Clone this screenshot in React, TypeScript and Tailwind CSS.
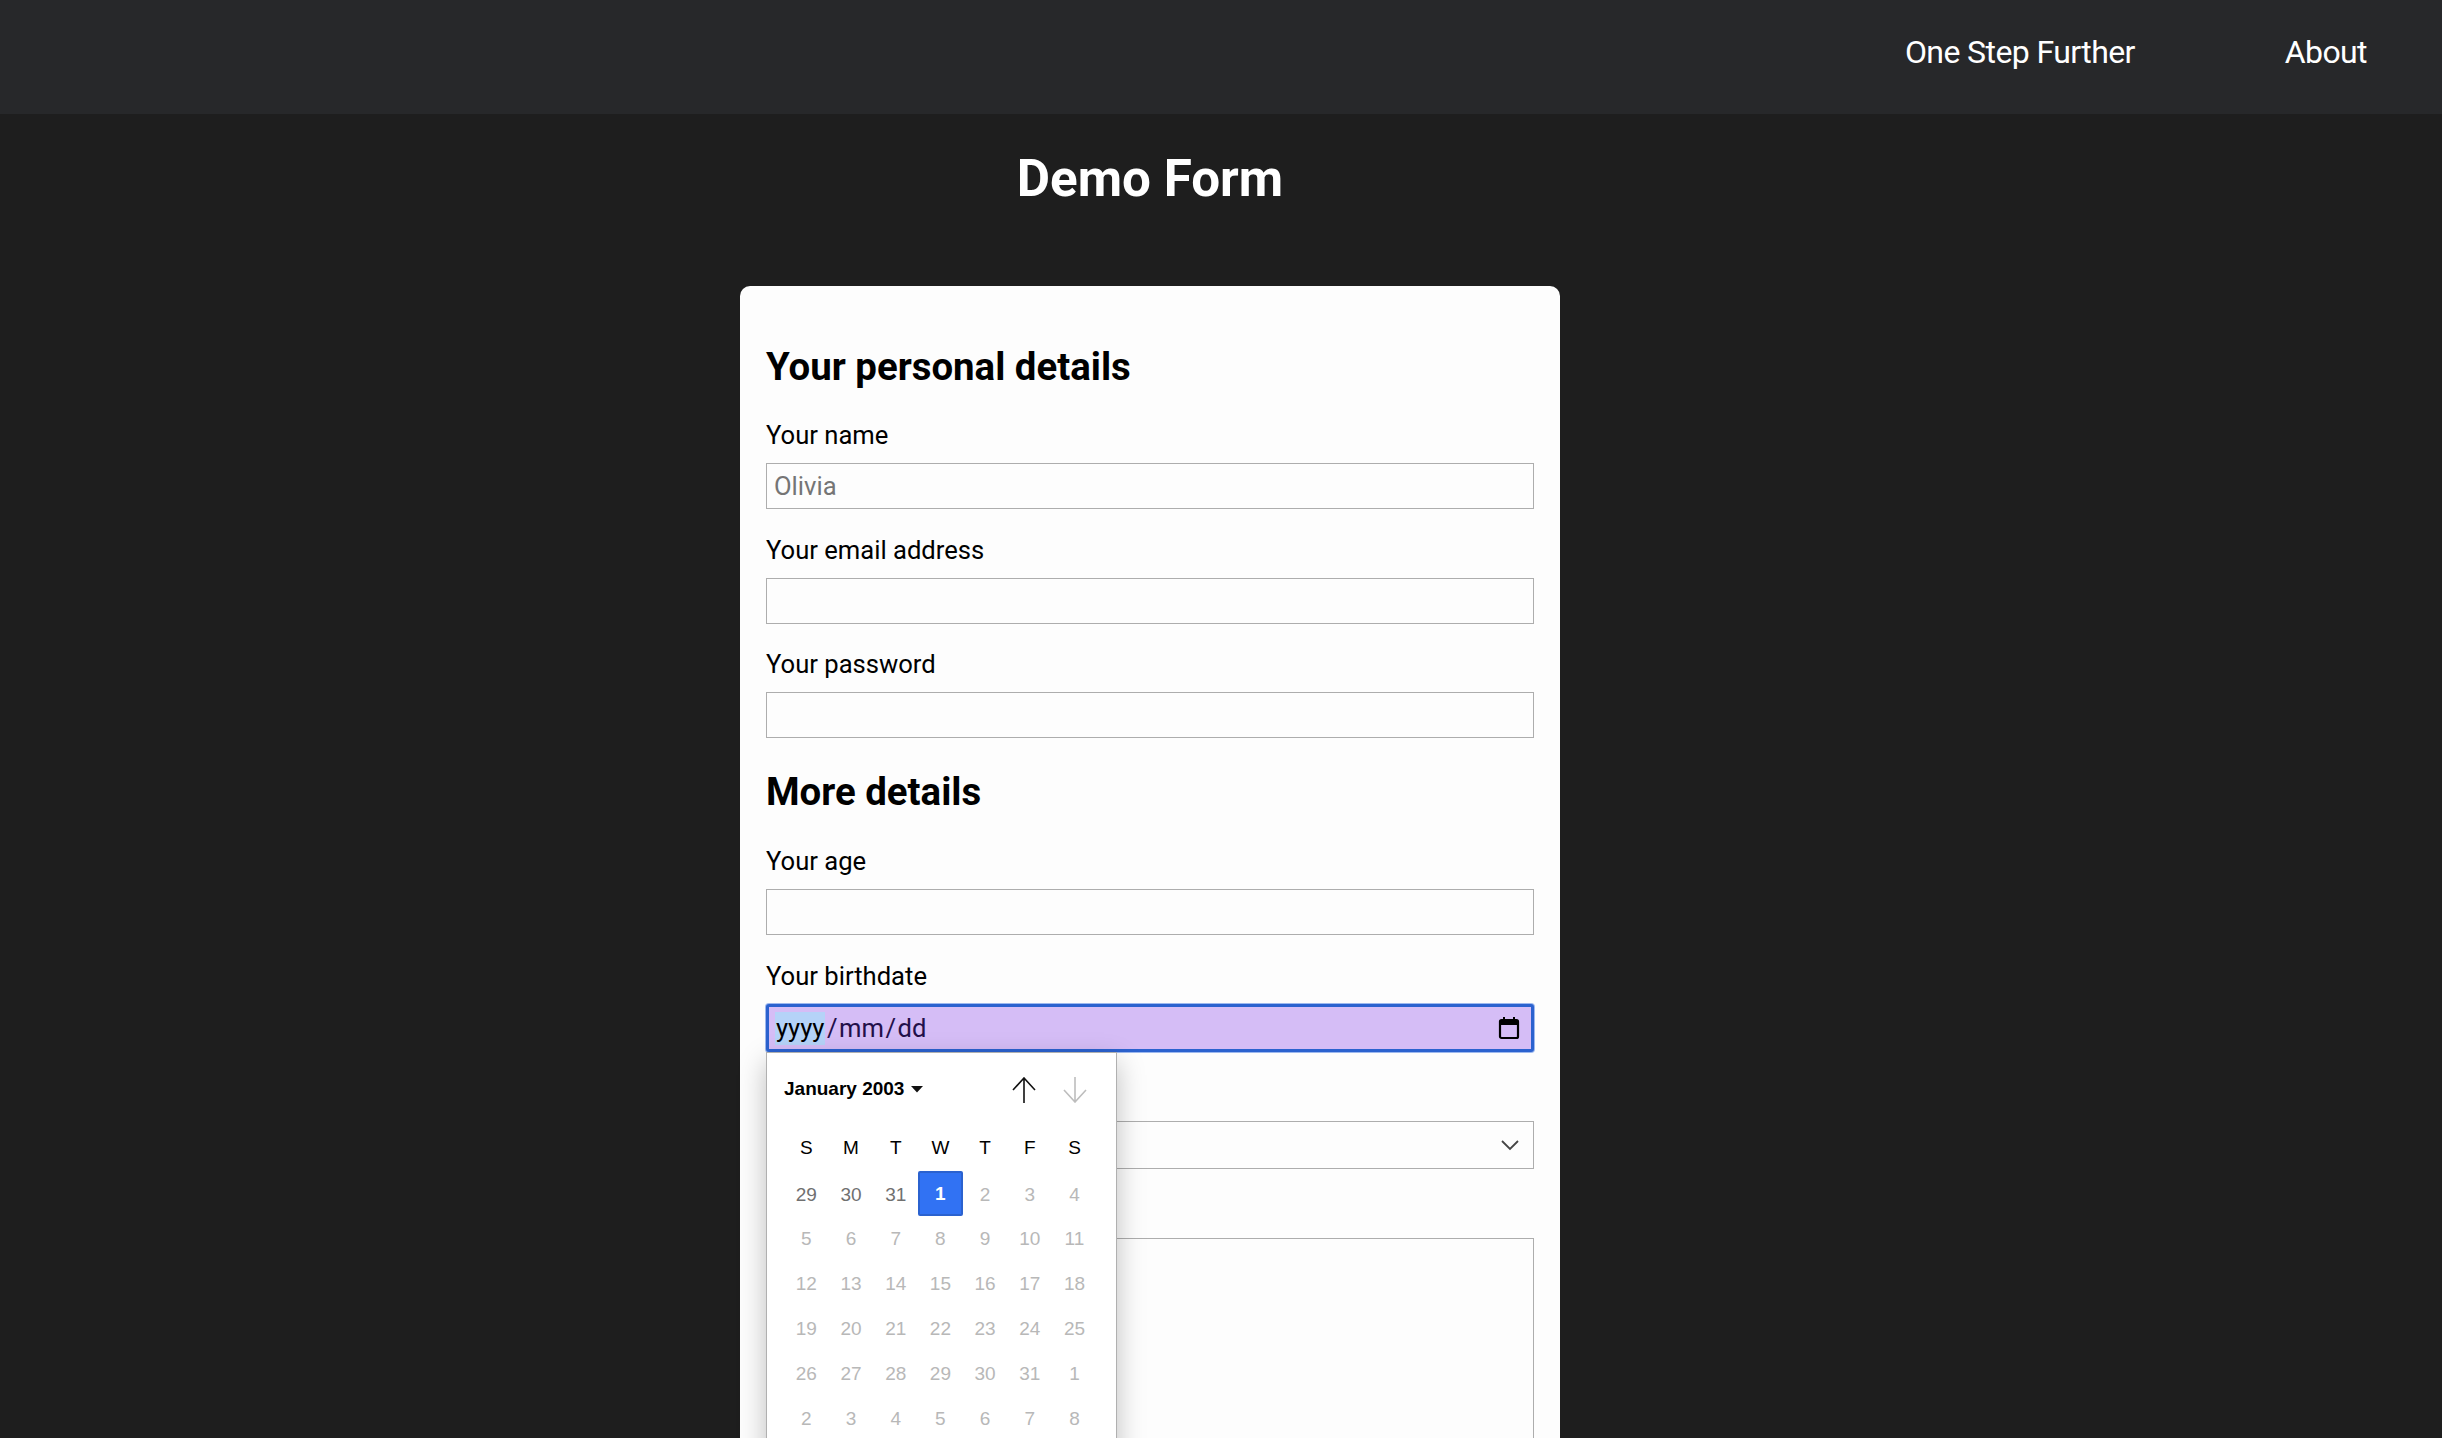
const rows = [
  ["29", "30", "31", "1", "2", "3", "4"],
  ["5", "6", "7", "8", "9", "10", "11"],
  ["12", "13", "14", "15", "16", "17", "18"],
  ["19", "20", "21", "22", "23", "24", "25"],
  ["26", "27", "28", "29", "30", "31", "1"],
  ["2", "3", "4", "5", "6", "7", "8"],
];

function Field({ label, placeholder }: { label: string; placeholder?: string }) {
  return (
    <div className="mb-[24.5px]">
      <label className="block text-[25.6px] leading-[32px] mb-[12px] text-black">{label}</label>
      <input
        placeholder={placeholder}
        className="block w-full h-[46px] border border-[#adadad] bg-[#fdfdfd] px-[7px] text-[25.6px] outline-none placeholder:text-[#757575]"
      />
    </div>
  );
}

function Calendar() {
  return (
    <div className="absolute z-10 left-0 top-[92px] w-[351px] h-[430px] bg-white border border-[#b0b0b0] shadow-[0_10px_26px_rgba(0,0,0,0.25)] font-['Liberation_Sans',sans-serif]">
      <div className="flex items-center h-[62px] mt-[6px] pl-[17px] pr-[29px]">
        <span className="text-[19px] font-bold text-black">January 2003</span>
        <svg width="12" height="7" viewBox="0 0 12 7" className="ml-[7px]">
          <path d="M0 0H12L6 6.5Z" fill="#111" />
        </svg>
        <svg width="24" height="26" viewBox="0 0 24 26" className="ml-auto" fill="none" stroke="#111" strokeWidth="1.6">
          <path d="M12 26V1M1 13L12 1L23 13" />
        </svg>
        <svg width="24" height="26" viewBox="0 0 24 26" className="ml-[27px]" fill="none" stroke="#bdbdbd" strokeWidth="1.6">
          <path d="M12 0V25M1 13L12 25L23 13" />
        </svg>
      </div>
      <div className="px-[17px]">
        <div className="grid grid-cols-[repeat(7,44.7px)] h-[46px] mt-[6px] pb-[2px] items-center text-center text-[19px] text-black">
          {["S", "M", "T", "W", "T", "F", "S"].map((d, i) => (
            <span key={i}>{d}</span>
          ))}
        </div>
        {rows.map((r, ri) => (
          <div key={ri} className="grid grid-cols-[repeat(7,44.7px)] h-[44.8px] items-center text-center text-[19px]">
            {r.map((d, i) => {
              if (ri === 0 && i === 3)
                return (
                  <span key={i} className="flex h-[45px] -mt-[3px] pt-[1px] items-center justify-center rounded-[2px] bg-[#3172f3] border-2 border-[#2b62cf] font-bold text-white">
                    {d}
                  </span>
                );
              return (
                <span key={i} className={ri === 0 && i < 3 ? "text-[#707070]" : "text-[#b8b8b8]"}>
                  {d}
                </span>
              );
            })}
          </div>
        ))}
      </div>
    </div>
  );
}

export default function App() {
  return (
    <div className="h-[1438px] overflow-hidden bg-[#1e1e1e] font-['Roboto',sans-serif]">
      <header className="flex h-[114px] items-start justify-end bg-[#27282a] pr-[75px] pt-[32px] text-[32px] leading-[40px] tracking-[-0.6px] text-white">
        <a className="mr-[150px]">One Step Further</a>
        <a>About</a>
      </header>
      <h1 className="w-[2300px] mt-[33px] text-center text-[51.2px] leading-[64px] font-bold text-white">Demo Form</h1>
      <main className="ml-[740px] mt-[75px] w-[820px] rounded-[10px] bg-[#fdfdfd] px-[26px] pt-[56px] h-[1200px]">
        <h2 className="text-[38.4px] leading-[50px] font-bold text-black mb-[27px]">Your personal details</h2>
        <Field label="Your name" placeholder="Olivia" />
        <Field label="Your email address" />
        <Field label="Your password" />
        <h2 className="text-[38.4px] leading-[50px] font-bold text-black mb-[28px] mt-[29px]">More details</h2>
        <Field label="Your age" />
        <div className="relative">
          <label className="block text-[25.6px] leading-[32px] mb-[12px] text-black">Your birthdate</label>
          <div className="flex h-[48px] items-center rounded-[3px] border-[3px] border-[#2b62cf] bg-[#d5bdf6] pl-[6px] pr-[11px] pt-[1px] text-[25.6px] text-[#23104a] shadow-[0_0_0_1px_#9db8ee]">
            <span className="bg-[#b5d3f8] px-px leading-[33px] text-black">yyyy</span>
            <span className="mx-[1.5px]">/</span>
            <span>mm</span>
            <span className="mx-[1.5px]">/</span>
            <span>dd</span>
            <svg width="22" height="24" viewBox="0 0 22 24" className="ml-auto" fill="none">
              <rect x="2" y="4" width="18" height="18" rx="1.5" stroke="#000" strokeWidth="2.2" />
              <path d="M1 5H21V9H1Z" fill="#000" />
              <path d="M6 1V5M16 1V5" stroke="#000" strokeWidth="2" />
            </svg>
          </div>
          <Calendar />
        </div>
        <div className="mt-[69px] flex h-[48px] items-center justify-end border border-[#adadad] bg-[#fdfdfd] pr-[14px]">
          <svg width="18" height="12" viewBox="0 0 18 12" fill="none" stroke="#444" strokeWidth="1.8">
            <path d="M1 2L9 10L17 2" />
          </svg>
        </div>
        <div className="mt-[69px] h-[300px] border border-[#adadad] bg-[#fdfdfd]" />
      </main>
    </div>
  );
}
